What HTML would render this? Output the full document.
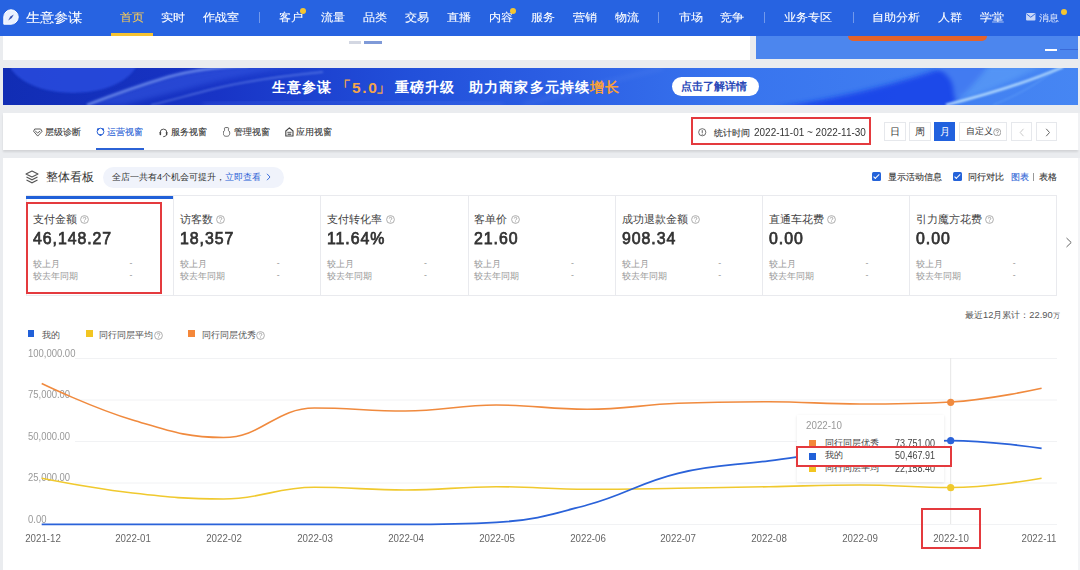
<!DOCTYPE html>
<html><head><meta charset="utf-8">
<style>
*{margin:0;padding:0;box-sizing:border-box}
html,body{width:1080px;height:570px;overflow:hidden;background:#eaecef;font-family:"Liberation Sans",sans-serif;color:#333}
.a{position:absolute;white-space:nowrap}
#nav{position:absolute;left:0;top:0;width:1080px;height:36px;background:#2763e1}
.ni{position:absolute;top:9.5px;font-size:12.4px;line-height:15px;color:#fff;letter-spacing:0.1px;margin-left:-0.3px;-webkit-text-stroke:0.1px currentColor;transform:scaleY(0.91)}
.sep{position:absolute;top:12px;width:1px;height:11px;background:rgba(255,255,255,0.35)}
.dot{position:absolute;width:6px;height:6px;border-radius:50%;background:#f5c531}
.tb{position:absolute;top:126.5px;font-size:9px;line-height:11px;color:#333;white-space:nowrap;-webkit-text-stroke:0.1px currentColor}
.bt{position:absolute;top:122px;height:19px;border:1px solid #e6e8ec;background:#fff;font-size:9.5px;line-height:17px;text-align:center;color:#333}
.cb{position:absolute;top:172px;width:9px;height:9px;border-radius:1.5px;background:#2563d9}
.cb:after{content:"";position:absolute;left:2.9px;top:1.1px;width:2.2px;height:4.6px;border:solid #fff;border-width:0 1.1px 1.1px 0;transform:rotate(45deg)}
.cl{position:absolute;top:212.5px;font-size:10.6px;line-height:12px;color:#444;white-space:nowrap}
.q{display:inline-block;position:relative;top:1px;margin-left:4px;width:8px;height:8px;border:0.8px solid #999;border-radius:50%}
.q:after{content:"?";position:absolute;left:0;top:-1.5px;width:6.5px;text-align:center;font-size:6.5px;line-height:9px;color:#999}
.cv{position:absolute;top:229px;font-size:17px;line-height:20px;font-weight:normal;-webkit-text-stroke:0.75px #333;letter-spacing:1px;transform:scaleX(0.935);transform-origin:0 0;color:#333;white-space:nowrap}
.cs{position:absolute;font-size:8.8px;line-height:11px;color:#999;white-space:nowrap}
.lg{position:absolute;top:329.5px;font-size:9.3px;line-height:11px;color:#555;white-space:nowrap}
.qs{display:inline-block;position:relative;top:1px;margin-left:1px;width:7.5px;height:7.5px;border:0.8px solid #999;border-radius:50%}
.yl{position:absolute;left:28px;font-size:10.3px;line-height:11px;color:#999;white-space:nowrap;transform:scaleX(0.92);transform-origin:0 0}
.xl{position:absolute;top:531.5px;width:60px;text-align:center;font-size:11.3px;line-height:13px;color:#666;white-space:nowrap;transform:scaleX(0.86)}
.tt{position:absolute;font-size:9px;line-height:11px;color:#444;white-space:nowrap}
.tn{position:absolute;font-size:10px;line-height:11px;color:#444;white-space:nowrap;transform:scaleX(0.9);transform-origin:0 0}
.qi{display:inline-block;vertical-align:top;margin-left:3.5px;margin-top:2px}
.qi2{display:inline-block;vertical-align:top;margin-left:0.5px;margin-top:1px}
</style></head><body>
<div id="nav">
  <svg class="a" style="left:2.5px;top:8.5px" width="16" height="16" viewBox="0 0 16 16"><path d="M0.8 15.2 L0.8 8 A7.2 7.2 0 1 1 8 15.2 Z" fill="#eaf1ff" stroke="#ffffff" stroke-width="1"/><path d="M10.8 5.4 L8.8 9.1 L5.2 11.4 L7.3 7.6 Z" fill="#3a55b5"/></svg>
  <div class="ni" style="left:26px;top:9px;font-size:14px;line-height:16px">生意参谋</div>
  <div class="ni" style="left:120px;color:#f3c75a">首页</div>
  <div class="a" style="left:111px;top:33px;width:42px;height:3px;background:#f5c230"></div>
  <div class="ni" style="left:161px">实时</div>
  <div class="ni" style="left:203px">作战室</div>
  <div class="sep" style="left:259px"></div>
  <div class="ni" style="left:279px">客户</div><div class="dot" style="left:300px;top:8px"></div>
  <div class="ni" style="left:321px">流量</div>
  <div class="ni" style="left:363px">品类</div>
  <div class="ni" style="left:405px">交易</div>
  <div class="ni" style="left:447px">直播</div>
  <div class="ni" style="left:489px">内容</div><div class="dot" style="left:510px;top:8px"></div>
  <div class="ni" style="left:531px">服务</div>
  <div class="ni" style="left:573px">营销</div>
  <div class="ni" style="left:615px">物流</div>
  <div class="sep" style="left:658px"></div>
  <div class="ni" style="left:679px">市场</div>
  <div class="ni" style="left:720px">竞争</div>
  <div class="sep" style="left:764px"></div>
  <div class="ni" style="left:784px">业务专区</div>
  <div class="sep" style="left:853px"></div>
  <div class="ni" style="left:872px">自助分析</div>
  <div class="ni" style="left:938px">人群</div>
  <div class="ni" style="left:980px">学堂</div>
  <svg class="a" style="left:1026px;top:13px" width="9.5" height="7.5" viewBox="0 0 10 8"><rect x="0" y="0" width="10" height="8" rx="1" fill="#c9d7f7"/><path d="M0.5 1 L5 4.5 L9.5 1" fill="none" stroke="#2763e1" stroke-width="1"/></svg>
  <div class="ni" style="left:1039px;top:11.5px;font-size:10px;line-height:12px;color:#d5e0fa">消息</div><div class="dot" style="left:1061px;top:9px"></div>
</div>

<!-- white strip under nav -->
<div class="a" style="left:3px;top:36px;width:747px;height:24px;background:#fff"></div>
<div class="a" style="left:348.5px;top:41px;width:12.5px;height:2.5px;background:#d3d7e2"></div>
<div class="a" style="left:364px;top:41px;width:17.5px;height:2.5px;background:#7f9ad8"></div>
<div class="a" style="left:756px;top:36px;width:322px;height:23px;background:#4c86ee"></div>
<div class="a" style="left:848px;top:36px;width:139px;height:4.5px;background:#e4622a;border-radius:0 0 6px 6px"></div>
<div class="a" style="left:1045px;top:49px;width:12px;height:2px;background:#fff"></div>
<div class="a" style="left:1060px;top:49px;width:18px;height:1px;background:#3a6ad8"></div>

<!-- banner -->
<svg class="a" style="left:3px;top:68px" width="1075" height="37" viewBox="0 0 1075 37">
<defs>
<linearGradient id="bg" x1="0" y1="0" x2="1" y2="0">
<stop offset="0" stop-color="#112db4"/><stop offset="0.2" stop-color="#1834c6"/><stop offset="0.38" stop-color="#2250da"/><stop offset="0.52" stop-color="#2c5fe4"/><stop offset="0.68" stop-color="#3874ee"/><stop offset="0.85" stop-color="#407ef1"/><stop offset="1" stop-color="#4686f3"/>
</linearGradient>
<filter id="bl"><feGaussianBlur stdDeviation="0.8"/></filter>
<filter id="bl2"><feGaussianBlur stdDeviation="2.5"/></filter>
<filter id="bl3"><feGaussianBlur stdDeviation="5"/></filter>
</defs>
<rect width="1075" height="37" fill="url(#bg)"/>
<ellipse cx="70" cy="-12" rx="66" ry="37" fill="#2a4ee0" opacity="0.8" filter="url(#bl)"/>
<path d="M84 37 C110 27 135 18 165 9 C190 2 215 -1 245 -2 L300 -2 C260 2 220 12 180 22 C160 27 140 32 120 37 Z" fill="#3558e2" opacity="0.55" filter="url(#bl2)"/>
<path d="M84 37 C110 27 135 18 165 9 C190 2 215 -1 245 -2" fill="none" stroke="#7e9cf2" stroke-width="2.6" opacity="0.75" filter="url(#bl)"/>
<path d="M148 37 C165 33 186 27 210 21 C230 16 260 10 320 4" fill="none" stroke="#7b98f0" stroke-width="1.4" opacity="0.6" filter="url(#bl)"/>
<path d="M200 37 C300 33 400 32 500 37" fill="none" stroke="#5a7ef0" stroke-width="3" opacity="0.4" filter="url(#bl2)"/>
<path d="M520 37 C560 25 600 15 660 0" fill="none" stroke="#6c94f2" stroke-width="2" opacity="0.35" filter="url(#bl2)"/>
<path d="M770 40 C840 30 900 14 945 -2 L985 -2 C975 12 960 28 945 40 Z" fill="#1540e8" opacity="0.85" filter="url(#bl2)"/>
<path d="M930 -2 L1040 -2 C1010 12 985 24 955 33 C945 28 960 12 930 -2 Z" fill="#62a4f8" opacity="0.55" filter="url(#bl2)"/>
<path d="M943 37 C990 25 1030 12 1060 -1" fill="none" stroke="#c0e4ff" stroke-width="2.4" opacity="0.95" filter="url(#bl)"/>
<path d="M990 37 C1020 25 1040 12 1055 -1" fill="none" stroke="#7ab8fa" stroke-width="1" opacity="0.5" filter="url(#bl)"/>
</svg>
<div class="a" style="left:272px;top:79.5px;font-size:13.6px;line-height:16px;font-weight:bold;letter-spacing:1.15px;color:#fff">生意参谋</div>
<div class="a" style="left:336px;top:79px;font-size:14.5px;line-height:16px;font-weight:bold;color:#f4a54a">「</div><div class="a" style="left:352px;top:78.5px;font-size:15.5px;line-height:17px;font-weight:bold;letter-spacing:1.6px;color:#f4a54a">5.0</div><div class="a" style="left:376px;top:79px;font-size:14.5px;line-height:16px;font-weight:bold;color:#f4a54a">」</div>
<div class="a" style="left:395px;top:79.5px;font-size:13.6px;line-height:16px;font-weight:bold;letter-spacing:1.15px;color:#fff">重磅升级</div>
<div class="a" style="left:469px;top:79.5px;font-size:13.6px;line-height:16px;font-weight:bold;letter-spacing:1.15px;color:#fff">助力商家多元持续<span style="color:#f7a03c">增长</span></div>
<div class="a" style="left:672px;top:77px;width:87px;height:19px;border-radius:10px;background:#fff"></div>
<div class="a" style="left:681px;top:80px;font-size:11.3px;line-height:13px;font-weight:bold;color:#2a49b8">点击了解详情</div>

<!-- tab panel -->
<div class="a" style="left:3px;top:112.5px;width:1075px;height:37.5px;background:#fff;box-shadow:0 1.5px 2px rgba(0,0,0,0.10)"></div>
<svg class="a" style="left:33px;top:127.5px" width="10" height="9" viewBox="0 0 10 9"><path d="M1.7 1 L7.7 1 L9.1 3.3 L4.7 8.1 L0.6 3.3 Z" fill="none" stroke="#555" stroke-width="0.95" stroke-linejoin="round"/><path d="M2.2 3 L4.7 5 L7.2 3" fill="none" stroke="#555" stroke-width="0.95"/></svg>
<div class="tb" style="left:45px">层级诊断</div>
<svg class="a" style="left:96px;top:127px" width="9" height="9" viewBox="0 0 9 9"><circle cx="4.5" cy="4.6" r="3.4" fill="none" stroke="#2b62d6" stroke-width="1"/><circle cx="2" cy="2.3" r="1.1" fill="#2b62d6"/><circle cx="7" cy="2.3" r="1.1" fill="#2b62d6"/><circle cx="4.5" cy="8" r="1.1" fill="#2b62d6"/></svg>
<div class="tb" style="left:107px;color:#2b62d6">运营视窗</div>
<div class="a" style="left:96px;top:148px;width:48px;height:2px;background:#2b62d6"></div>
<svg class="a" style="left:159px;top:127.5px" width="9" height="10" viewBox="0 0 9 10"><path d="M1.2 5.2 L1.2 4.4 A3.3 3.3 0 0 1 7.8 4.4 L7.8 5.2" fill="none" stroke="#444" stroke-width="0.9"/><rect x="0.6" y="3.9" width="1.5" height="3.3" rx="0.7" fill="#444"/><rect x="6.9" y="3.9" width="1.5" height="3.3" rx="0.7" fill="#444"/><path d="M7.4 7 Q7 8.6 4.2 8.7" fill="none" stroke="#444" stroke-width="0.9"/></svg>
<div class="tb" style="left:171px">服务视窗</div>
<svg class="a" style="left:222.5px;top:127px" width="8" height="10" viewBox="0 0 8 10"><path d="M1.8 3.1 C1.3 2 1.2 0.7 2.2 0.6 L4.9 0.6 C5.9 0.7 5.7 2 5.2 3.1 C6.7 4.1 7 6 6.5 7.5 C6 9 5 9.3 3.5 9.3 C2 9.3 1 9 0.5 7.5 C0 6 0.3 4.1 1.8 3.1 Z" fill="none" stroke="#555" stroke-width="0.9"/></svg>
<div class="tb" style="left:233.5px">管理视窗</div>
<svg class="a" style="left:285px;top:126.5px" width="9" height="10" viewBox="0 0 9 10"><path d="M0.8 9 L0.8 4 L4.4 0.9 L8 4 L8 9 Z" fill="none" stroke="#444" stroke-width="1.1" stroke-linejoin="round"/><path d="M2.3 5.3 L6.5 5.3" stroke="#444" stroke-width="0.9"/><path d="M2.6 7.2 L6.2 7.2" stroke="#444" stroke-width="1.2"/></svg>
<div class="tb" style="left:296px">应用视窗</div>

<div class="a" style="left:691px;top:117px;width:180px;height:28px;border:2px solid #e43a3e"></div>
<svg class="a" style="left:698px;top:128px" width="8.5" height="8.5" viewBox="0 0 9 9"><circle cx="4.5" cy="4.5" r="3.8" fill="none" stroke="#555" stroke-width="0.9"/><path d="M4.5 2.3 L4.5 5.2" stroke="#555" stroke-width="1"/><circle cx="4.5" cy="6.5" r="0.55" fill="#555"/></svg>
<div class="a" style="left:714px;top:127.5px;font-size:9px;line-height:11px;color:#333;-webkit-text-stroke:0.1px #333">统计时间</div>
<div class="a" style="left:753.5px;top:126px;font-size:10.8px;line-height:13px;color:#333;transform:scaleX(0.923);transform-origin:0 0">2022-11-01 ~ 2022-11-30</div>

<div class="bt" style="left:884px;width:22px">日</div>
<div class="bt" style="left:909px;width:22px">周</div>
<div class="bt" style="left:934px;width:21px;background:#2161de;border-color:#2161de;color:#fff">月</div>
<div class="bt" style="left:959px;width:48px;text-align:left;padding-left:5.5px;font-size:8.9px">自定义</div>
<svg class="a" style="left:992.5px;top:127.5px" width="8.5" height="8.5" viewBox="0 0 9 9"><circle cx="4.5" cy="4.5" r="3.8" fill="none" stroke="#888" stroke-width="0.8"/><path d="M3.2 3.6 A1.3 1.3 0 1 1 4.5 4.9 L4.5 5.6" fill="none" stroke="#888" stroke-width="0.8"/><circle cx="4.5" cy="6.7" r="0.5" fill="#888"/></svg>
<div class="bt" style="left:1011px;width:21px"><svg style="position:absolute;left:7px;top:4.5px" width="6" height="9" viewBox="0 0 6 9"><path d="M4.5 0.8 L1.2 4.5 L4.5 8.2" fill="none" stroke="#c8c8c8" stroke-width="1"/></svg></div>
<div class="bt" style="left:1036px;width:21px"><svg style="position:absolute;left:7.5px;top:4.5px" width="6" height="9" viewBox="0 0 6 9"><path d="M1.2 0.8 L4.5 4.5 L1.2 8.2" fill="none" stroke="#666" stroke-width="1"/></svg></div>

<!-- main panel -->
<div class="a" style="left:3px;top:158px;width:1075px;height:412px;background:#fff"></div>
<svg class="a" style="left:25px;top:170px" width="14" height="14" viewBox="0 0 14 14"><path d="M7 1 L13 4 L7 7 L1 4 Z" fill="none" stroke="#555" stroke-width="1.1" stroke-linejoin="round"/><path d="M1.5 7 L7 9.8 L12.5 7" fill="none" stroke="#555" stroke-width="1.1"/><path d="M1.5 10 L7 12.8 L12.5 10" fill="none" stroke="#555" stroke-width="1.1"/></svg>
<div class="a" style="left:45.5px;top:169.5px;font-size:12px;line-height:14px;color:#333">整体看板</div>
<div class="a" style="left:102.5px;top:166.5px;width:181px;height:21px;border-radius:11px;background:#f0f3fb"></div>
<div class="a" style="left:112px;top:172px;font-size:9px;line-height:11px;color:#333">全店一共有4个机会可提升，<span style="color:#2b62d6">立即查看</span></div>
<svg class="a" style="left:265.5px;top:173px" width="5" height="8" viewBox="0 0 5 8"><path d="M1 0.8 L4 4 L1 7.2" fill="none" stroke="#2b62d6" stroke-width="0.9"/></svg>

<div class="cb" style="left:872px"></div>
<div class="a" style="left:888px;top:172px;font-size:9px;line-height:11px;color:#333;-webkit-text-stroke:0.1px #333">显示活动信息</div>
<div class="cb" style="left:953px"></div>
<div class="a" style="left:968px;top:172px;font-size:9px;line-height:11px;color:#333;-webkit-text-stroke:0.1px #333">同行对比</div>
<div class="a" style="left:1011px;top:172px;font-size:9px;line-height:11px;color:#2b62d6;-webkit-text-stroke:0.1px #2b62d6">图表</div>
<div class="a" style="left:1033px;top:172.5px;width:1px;height:8px;background:#999"></div>
<div class="a" style="left:1039px;top:172px;font-size:9px;line-height:11px;color:#333;-webkit-text-stroke:0.1px #333">表格</div>

<!-- cards -->
<div class="a" style="left:26px;top:195px;width:1031px;height:101px;border:1px solid #e9eaee;border-right:1px solid #e9eaee"></div>
<div class="cl" style="left:32.7px">支付金额<svg class="qi" width="9" height="9" viewBox="0 0 9 9"><circle cx="4.5" cy="4.5" r="3.9" fill="none" stroke="#a0a0a0" stroke-width="0.85"/><path d="M3.3 3.5 A1.25 1.25 0 1 1 4.9 4.7 Q4.5 4.95 4.5 5.5" fill="none" stroke="#a0a0a0" stroke-width="0.85"/><circle cx="4.5" cy="6.7" r="0.5" fill="#a0a0a0"/></svg></div>
<div class="cv" style="left:32.7px">46,148.27</div>
<div class="cs" style="left:32.7px;top:258.5px">较上月</div>
<div class="cs" style="left:32.7px;top:270.5px">较去年同期</div>
<div class="cs" style="left:129.5px;top:258px">-</div>
<div class="cs" style="left:129.5px;top:270px">-</div>
<div class="a" style="left:173.2px;top:196px;width:1px;height:100px;background:#e9eaee"></div>
<div class="cl" style="left:179.9px">访客数<svg class="qi" width="9" height="9" viewBox="0 0 9 9"><circle cx="4.5" cy="4.5" r="3.9" fill="none" stroke="#a0a0a0" stroke-width="0.85"/><path d="M3.3 3.5 A1.25 1.25 0 1 1 4.9 4.7 Q4.5 4.95 4.5 5.5" fill="none" stroke="#a0a0a0" stroke-width="0.85"/><circle cx="4.5" cy="6.7" r="0.5" fill="#a0a0a0"/></svg></div>
<div class="cv" style="left:179.9px">18,357</div>
<div class="cs" style="left:179.9px;top:258.5px">较上月</div>
<div class="cs" style="left:179.9px;top:270.5px">较去年同期</div>
<div class="cs" style="left:276.7px;top:258px">-</div>
<div class="cs" style="left:276.7px;top:270px">-</div>
<div class="a" style="left:320.4px;top:196px;width:1px;height:100px;background:#e9eaee"></div>
<div class="cl" style="left:327.1px">支付转化率<svg class="qi" width="9" height="9" viewBox="0 0 9 9"><circle cx="4.5" cy="4.5" r="3.9" fill="none" stroke="#a0a0a0" stroke-width="0.85"/><path d="M3.3 3.5 A1.25 1.25 0 1 1 4.9 4.7 Q4.5 4.95 4.5 5.5" fill="none" stroke="#a0a0a0" stroke-width="0.85"/><circle cx="4.5" cy="6.7" r="0.5" fill="#a0a0a0"/></svg></div>
<div class="cv" style="left:327.1px">11.64%</div>
<div class="cs" style="left:327.1px;top:258.5px">较上月</div>
<div class="cs" style="left:327.1px;top:270.5px">较去年同期</div>
<div class="cs" style="left:423.9px;top:258px">-</div>
<div class="cs" style="left:423.9px;top:270px">-</div>
<div class="a" style="left:467.6px;top:196px;width:1px;height:100px;background:#e9eaee"></div>
<div class="cl" style="left:474.3px">客单价<svg class="qi" width="9" height="9" viewBox="0 0 9 9"><circle cx="4.5" cy="4.5" r="3.9" fill="none" stroke="#a0a0a0" stroke-width="0.85"/><path d="M3.3 3.5 A1.25 1.25 0 1 1 4.9 4.7 Q4.5 4.95 4.5 5.5" fill="none" stroke="#a0a0a0" stroke-width="0.85"/><circle cx="4.5" cy="6.7" r="0.5" fill="#a0a0a0"/></svg></div>
<div class="cv" style="left:474.3px">21.60</div>
<div class="cs" style="left:474.3px;top:258.5px">较上月</div>
<div class="cs" style="left:474.3px;top:270.5px">较去年同期</div>
<div class="cs" style="left:571.1px;top:258px">-</div>
<div class="cs" style="left:571.1px;top:270px">-</div>
<div class="a" style="left:614.8px;top:196px;width:1px;height:100px;background:#e9eaee"></div>
<div class="cl" style="left:621.5px">成功退款金额<svg class="qi" width="9" height="9" viewBox="0 0 9 9"><circle cx="4.5" cy="4.5" r="3.9" fill="none" stroke="#a0a0a0" stroke-width="0.85"/><path d="M3.3 3.5 A1.25 1.25 0 1 1 4.9 4.7 Q4.5 4.95 4.5 5.5" fill="none" stroke="#a0a0a0" stroke-width="0.85"/><circle cx="4.5" cy="6.7" r="0.5" fill="#a0a0a0"/></svg></div>
<div class="cv" style="left:621.5px">908.34</div>
<div class="cs" style="left:621.5px;top:258.5px">较上月</div>
<div class="cs" style="left:621.5px;top:270.5px">较去年同期</div>
<div class="cs" style="left:718.3px;top:258px">-</div>
<div class="cs" style="left:718.3px;top:270px">-</div>
<div class="a" style="left:762.0px;top:196px;width:1px;height:100px;background:#e9eaee"></div>
<div class="cl" style="left:768.7px">直通车花费<svg class="qi" width="9" height="9" viewBox="0 0 9 9"><circle cx="4.5" cy="4.5" r="3.9" fill="none" stroke="#a0a0a0" stroke-width="0.85"/><path d="M3.3 3.5 A1.25 1.25 0 1 1 4.9 4.7 Q4.5 4.95 4.5 5.5" fill="none" stroke="#a0a0a0" stroke-width="0.85"/><circle cx="4.5" cy="6.7" r="0.5" fill="#a0a0a0"/></svg></div>
<div class="cv" style="left:768.7px">0.00</div>
<div class="cs" style="left:768.7px;top:258.5px">较上月</div>
<div class="cs" style="left:768.7px;top:270.5px">较去年同期</div>
<div class="cs" style="left:865.5px;top:258px">-</div>
<div class="cs" style="left:865.5px;top:270px">-</div>
<div class="a" style="left:909.2px;top:196px;width:1px;height:100px;background:#e9eaee"></div>
<div class="cl" style="left:915.9px">引力魔方花费<svg class="qi" width="9" height="9" viewBox="0 0 9 9"><circle cx="4.5" cy="4.5" r="3.9" fill="none" stroke="#a0a0a0" stroke-width="0.85"/><path d="M3.3 3.5 A1.25 1.25 0 1 1 4.9 4.7 Q4.5 4.95 4.5 5.5" fill="none" stroke="#a0a0a0" stroke-width="0.85"/><circle cx="4.5" cy="6.7" r="0.5" fill="#a0a0a0"/></svg></div>
<div class="cv" style="left:915.9px">0.00</div>
<div class="cs" style="left:915.9px;top:258.5px">较上月</div>
<div class="cs" style="left:915.9px;top:270.5px">较去年同期</div>
<div class="cs" style="left:1012.7px;top:258px">-</div>
<div class="cs" style="left:1012.7px;top:270px">-</div>
<div class="a" style="left:26px;top:196px;width:147px;height:3px;background:#2160d8"></div>
<div class="a" style="left:26px;top:202px;width:136px;height:92px;border:2px solid #e43a3e"></div>
<svg class="a" style="left:1065px;top:237px" width="8" height="11" viewBox="0 0 8 11"><path d="M1.5 1 L6.2 5.5 L1.5 10" fill="none" stroke="#666" stroke-width="1"/></svg>


<!-- chart -->
<div class="a" style="left:965px;top:309.5px;font-size:9.3px;line-height:11px;color:#555">最近12月累计：22.90<span style="font-size:6.5px">万</span></div>
<div class="a" style="left:28px;top:330px;width:6px;height:7px;background:#2160d8"></div>
<div class="lg" style="left:41.5px">我的</div>
<div class="a" style="left:86px;top:330px;width:7px;height:7px;background:#f2c521"></div>
<div class="lg" style="left:99.3px">同行同层平均<svg class="qi2" width="9" height="9" viewBox="0 0 9 9"><circle cx="4.5" cy="4.5" r="3.9" fill="none" stroke="#a0a0a0" stroke-width="0.85"/><path d="M3.3 3.5 A1.25 1.25 0 1 1 4.9 4.7 Q4.5 4.95 4.5 5.5" fill="none" stroke="#a0a0a0" stroke-width="0.85"/><circle cx="4.5" cy="6.7" r="0.5" fill="#a0a0a0"/></svg></div>
<div class="a" style="left:188px;top:330px;width:7px;height:7px;background:#f4873a"></div>
<div class="lg" style="left:201.6px">同行同层优秀<svg class="qi2" width="9" height="9" viewBox="0 0 9 9"><circle cx="4.5" cy="4.5" r="3.9" fill="none" stroke="#a0a0a0" stroke-width="0.85"/><path d="M3.3 3.5 A1.25 1.25 0 1 1 4.9 4.7 Q4.5 4.95 4.5 5.5" fill="none" stroke="#a0a0a0" stroke-width="0.85"/><circle cx="4.5" cy="6.7" r="0.5" fill="#a0a0a0"/></svg></div>
<div class="yl" style="top:347.5px">100,000.00</div>
<div class="yl" style="top:389px">75,000.00</div>
<div class="yl" style="top:430.5px">50,000.00</div>
<div class="yl" style="top:472px">25,000.00</div>
<div class="yl" style="top:513.5px">0.00</div>
<svg class="a" style="left:0;top:0" width="1080" height="570" viewBox="0 0 1080 570">
<line x1="75" y1="358.5" x2="1057" y2="358.5" stroke="#f1f2f4" stroke-width="1"/><line x1="75" y1="400" x2="1057" y2="400" stroke="#f1f2f4" stroke-width="1"/><line x1="75" y1="441.5" x2="1057" y2="441.5" stroke="#f1f2f4" stroke-width="1"/><line x1="75" y1="483" x2="1057" y2="483" stroke="#f1f2f4" stroke-width="1"/>
<line x1="75" y1="524.5" x2="1057" y2="524.5" stroke="#f1f2f4" stroke-width="1"/><line x1="950.7" y1="358" x2="950.7" y2="524" stroke="#e6e6e6" stroke-width="1"/>
<path d="M41.70 383.50 C41.70 383.50 93.34 408.34 132.60 420.00 C169.70 431.02 185.93 437.50 223.50 437.50 C262.29 437.50 275.28 408.00 314.40 408.00 C351.63 408.00 367.15 411.00 405.30 411.00 C443.51 411.00 458.00 405.00 496.20 405.00 C534.36 405.00 548.94 409.30 587.10 409.30 C625.30 409.30 639.78 404.90 678.00 403.30 C716.14 401.71 730.73 401.70 768.90 401.70 C807.08 401.70 821.62 404.00 859.80 404.00 C897.98 404.00 912.73 404.00 950.70 401.95 C989.09 399.87 1041.60 388.30 1041.60 388.30" fill="none" stroke="#f08a3e" stroke-width="1.6"/>
<path d="M41.70 478.30 C41.70 478.30 94.22 488.63 132.60 493.00 C170.57 497.32 185.44 499.00 223.50 499.00 C261.79 499.00 276.07 487.30 314.40 487.30 C352.43 487.30 367.13 490.00 405.30 490.00 C443.48 490.00 458.02 486.70 496.20 486.70 C534.37 486.70 548.92 489.30 587.10 489.30 C625.27 489.30 639.82 488.85 678.00 488.30 C716.18 487.75 730.72 487.39 768.90 486.70 C807.08 486.01 821.63 485.00 859.80 485.00 C897.98 485.00 912.61 487.54 950.70 487.54 C988.97 487.54 1041.60 478.30 1041.60 478.30" fill="none" stroke="#f0c92e" stroke-width="1.6"/>
<path d="M41.70 524.30 C41.70 524.30 94.42 524.30 132.60 524.30 C170.78 524.30 185.32 524.30 223.50 524.30 C261.68 524.30 276.22 524.30 314.40 524.30 C352.58 524.30 367.13 524.30 405.30 524.30 C443.48 524.30 458.36 524.30 496.20 522.30 C534.71 520.26 549.68 515.09 587.10 505.00 C626.03 494.51 638.91 482.80 678.00 473.30 C715.26 464.24 730.70 465.91 768.90 460.80 C807.06 455.70 821.54 453.26 859.80 449.00 C897.90 444.76 912.51 440.57 950.70 440.57 C988.87 440.57 1041.60 448.30 1041.60 448.30" fill="none" stroke="#2a62d9" stroke-width="1.8"/>
<circle cx="950.7" cy="402.3" r="3.6" fill="#f08a3e"/>
<circle cx="950.7" cy="440.7" r="3.6" fill="#2a62d9"/>
<circle cx="950.7" cy="487.7" r="3.6" fill="#f0c92e"/>
</svg>
<div class="xl" style="left:13.3px">2021-12</div><div class="xl" style="left:103.0px">2022-01</div><div class="xl" style="left:193.9px">2022-02</div><div class="xl" style="left:284.8px">2022-03</div><div class="xl" style="left:375.7px">2022-04</div><div class="xl" style="left:466.6px">2022-05</div><div class="xl" style="left:557.5px">2022-06</div><div class="xl" style="left:648.4px">2022-07</div><div class="xl" style="left:739.3px">2022-08</div><div class="xl" style="left:830.2px">2022-09</div><div class="xl" style="left:921.1px">2022-10</div><div class="xl" style="left:1009px">2022-11</div>
<div class="a" style="left:797px;top:415px;width:147px;height:67px;background:#fff;box-shadow:0 1px 3px rgba(0,0,0,0.10)"></div>
<div class="a" style="left:805.5px;top:419.5px;font-size:10.3px;line-height:12px;color:#999;transform:scaleX(0.95);transform-origin:0 0">2022-10</div>
<div class="a" style="left:808.5px;top:440px;width:7px;height:7px;background:#f4873a"></div>
<div class="tt" style="left:825px;top:437.5px">同行同层优秀</div><div class="tn" style="left:895px;top:437.5px">73,751.00</div>
<div class="a" style="left:808.5px;top:465px;width:7px;height:7px;background:#f2c521"></div>
<div class="tt" style="left:825px;top:462.5px">同行同层平均</div><div class="tn" style="left:895px;top:462.5px">22,158.40</div>
<div class="a" style="left:796.3px;top:446px;width:155.7px;height:20.7px;border:2px solid #e43a3e;background:#fff"></div>
<div class="a" style="left:808.5px;top:452.5px;width:7px;height:7px;background:#2160d8"></div>
<div class="tt" style="left:825px;top:450px">我的</div><div class="tn" style="left:895px;top:450px">50,467.91</div>
<div class="a" style="left:921px;top:508px;width:60px;height:41px;border:2px solid #e43a3e"></div>
<div class="a" style="left:1078px;top:112.5px;width:2px;height:37.5px;background:#f1f2f4"></div><div class="a" style="left:1078px;top:158px;width:2px;height:412px;background:#f3f4f6"></div>
</body></html>
